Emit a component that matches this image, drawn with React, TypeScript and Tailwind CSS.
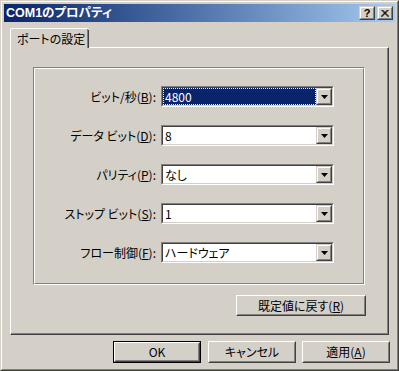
import React from "react";

const rows = [
  { label: "ビット/秒(", key: "B", value: "4800", selected: true },
  { label: "データ ビット(", key: "D", value: "8" },
  { label: "パリティ(", key: "P", value: "なし" },
  { label: "ストップ ビット(", key: "S", value: "1" },
  { label: "フロー制御(", key: "F", value: "ハードウェア" },
];

function Arrow() {
  return (
    <svg width="7" height="4" viewBox="0 0 7 4">
      <polygon points="0,0 7,0 3.5,4" fill="#000" />
    </svg>
  );
}

function Combo({ value, selected }: { value: string; selected?: boolean }) {
  return (
    <div className="w-[173px] h-[21px] border border-t-[#808080] border-l-[#808080] border-r-white border-b-white">
      <div className="h-full flex border border-t-[#404040] border-l-[#404040] border-r-[#d4d0c8] border-b-[#d4d0c8] bg-white">
        <div className="flex-1 flex items-center">
          {selected ? (
            <div className="w-full h-full flex items-center bg-[#0a246a] text-white border border-dotted border-[#ffff99] pl-px leading-none">
              {value}
            </div>
          ) : (
            <span className="pl-[2px] leading-none">{value}</span>
          )}
        </div>
        <div className="w-[16px] h-[17px] border border-t-[#d4d0c8] border-l-[#d4d0c8] border-r-[#404040] border-b-[#404040]">
          <div className="h-full flex items-center justify-center bg-[#d4d0c8] border border-t-white border-l-white border-r-[#808080] border-b-[#808080]">
            <Arrow />
          </div>
        </div>
      </div>
    </div>
  );
}

function Button({
  children,
  width,
  height = 22,
  isDefault,
}: {
  children: React.ReactNode;
  width: string;
  height?: number;
  isDefault?: boolean;
}) {
  const inner = (
    <div className="h-full border border-t-white border-l-white border-r-[#404040] border-b-[#404040]">
      <div className="h-full flex items-center justify-center bg-[#d4d0c8] border border-t-[#d4d0c8] border-l-[#d4d0c8] border-r-[#808080] border-b-[#808080] leading-none">
        {children}
      </div>
    </div>
  );
  return (
    <div className={`${width} ${height === 22 ? "h-[22px]" : "h-[21px]"}`}>
      {isDefault ? <div className="h-full border border-black">{inner}</div> : inner}
    </div>
  );
}

function CaptionButton({ children }: { children: React.ReactNode }) {
  return (
    <div className="w-[16px] h-[14px] border border-t-[#d4d0c8] border-l-[#d4d0c8] border-r-[#404040] border-b-[#404040]">
      <div className="h-full flex items-center justify-center bg-[#d4d0c8] border border-t-white border-l-white border-r-[#808080] border-b-[#808080]">
        {children}
      </div>
    </div>
  );
}

export default function App() {
  return (
    <div className="w-[399px] h-[371px] bg-[#d4d0c8] text-black text-[12px] font-['Noto_Sans_CJK_JP',sans-serif] [font-feature-settings:'palt'] border border-t-[#d4d0c8] border-l-[#d4d0c8] border-r-[#404040] border-b-[#404040]">
      <div className="h-full border border-t-white border-l-white border-r-[#808080] border-b-[#808080] p-[2px] flex flex-col">
        {/* Title bar */}
        <div className="h-[18px] flex items-center justify-between bg-gradient-to-r from-[#0a246a] to-[#a6caf0]">
          <span className="pl-[2px] text-white font-bold text-[12.5px] font-['Liberation_Sans','Noto_Sans_CJK_JP',sans-serif] leading-none">
            COM1のプロパティ
          </span>
          <div className="flex gap-[2px] pr-[2px]">
            <CaptionButton>
              <span className="font-['Liberation_Sans',sans-serif] font-bold text-[11px] leading-none">?</span>
            </CaptionButton>
            <CaptionButton>
              <svg width="8" height="7" viewBox="0 0 8 7">
                <path d="M0.5 0 L7.5 7 M1.5 0 L8 6.5 M7.5 0 L0.5 7 M6.5 0 L0 6.5" stroke="#000" strokeWidth="1" />
              </svg>
            </CaptionButton>
          </div>
        </div>

        {/* Body */}
        <div className="flex-1 flex flex-col pt-[6px] pl-[6px] pr-[4px]">
          <div className="w-[379px]">
            {/* Tab strip */}
            <div className="flex">
              <div className="relative z-10 -mb-px h-[20px] w-[78px] bg-[#d4d0c8] border-l border-t border-l-white border-t-white rounded-tl-[2px]">
                <div className="h-full flex items-center pl-[6px] border-r border-r-[#808080] relative">
                  <span className="leading-none">ポートの設定</span>
                  <div className="absolute -right-[2px] top-[1px] bottom-0 w-px bg-[#404040]" />
                </div>
              </div>
            </div>
            {/* Tab panel */}
            <div className="h-[288px] border border-t-white border-l-white border-r-[#404040] border-b-[#404040]">
              <div className="h-full border-r border-b border-r-[#808080] border-b-[#808080] flex flex-col">
                {/* Etched group frame */}
                <div className="ml-[22px] mt-[19px] w-[332px] h-[218px] border border-t-[#808080] border-l-[#808080] border-r-white border-b-white">
                  <div className="h-full border border-t-white border-l-white border-r-[#808080] border-b-[#808080] flex flex-col pt-[17px] gap-[18px]">
                    {rows.map((r) => (
                      <div key={r.key} className="flex items-center">
                        <div className="w-[121px] text-right leading-none whitespace-nowrap">
                          {r.label}
                          <u>{r.key}</u>):
                        </div>
                        <div className="ml-[5px]">
                          <Combo value={r.value} selected={r.selected} />
                        </div>
                      </div>
                    ))}
                  </div>
                </div>
                <div className="mt-[10px] ml-[225px]">
                  <Button width="w-[130px]" height={21}>
                    既定値に戻す(<u>R</u>)
                  </Button>
                </div>
              </div>
            </div>
          </div>

          {/* Dialog buttons */}
          <div className="mt-[6px] flex justify-end pr-[1px]">
            <Button width="w-[88px]" isDefault>
              OK
            </Button>
            <div className="ml-[7px]">
              <Button width="w-[88px]">キャンセル</Button>
            </div>
            <div className="ml-[6px]">
              <Button width="w-[88px]">
                適用(<u>A</u>)
              </Button>
            </div>
          </div>
        </div>
      </div>
    </div>
  );
}
